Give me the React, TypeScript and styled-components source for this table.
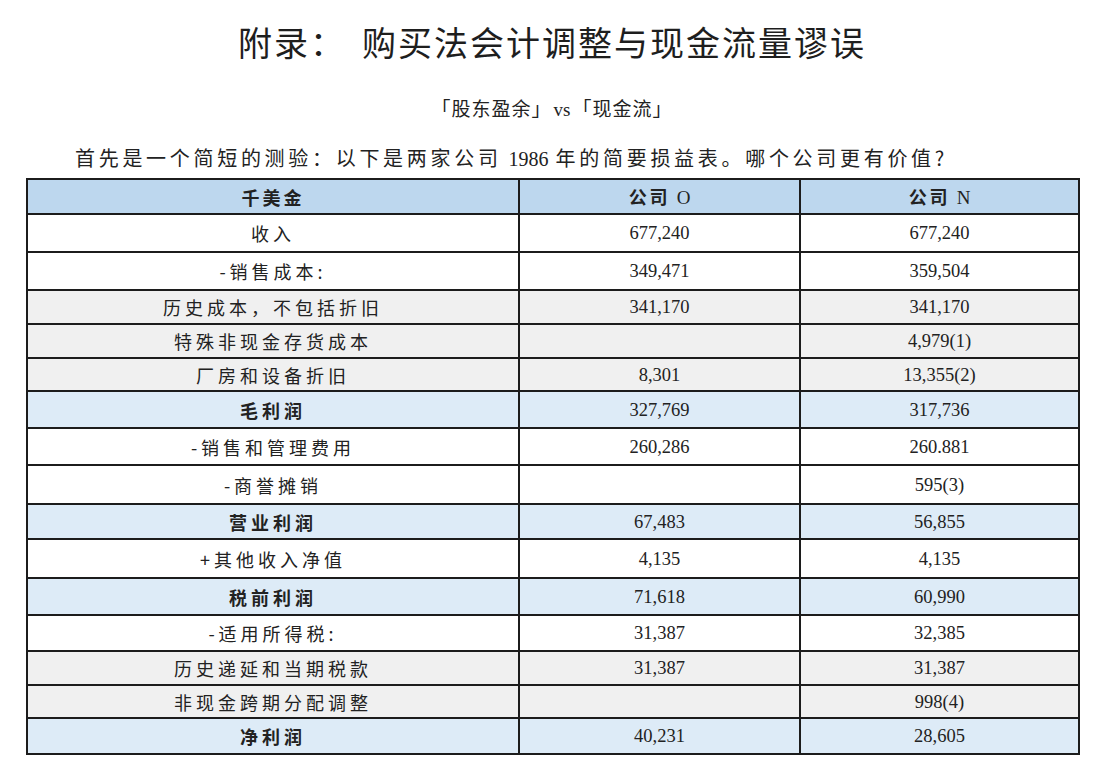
import React from 'react'
import styled, {createGlobalStyle} from 'styled-components'

const GlobalStyle = createGlobalStyle`
  html, body {
    margin: 0;
    padding: 0;
    background: #ffffff;
  }
`

const cjk = `"Noto Sans CJK SC", "Noto Sans", sans-serif`
const serif = `"Liberation Serif", "Noto Sans CJK SC", serif`

const Page = styled.div`
  width: 1102px;
  box-sizing: border-box;
  padding: 20px 24px 0 26px;
  color: #222;
  font-family: ${cjk};
`

const Title = styled.h1`
  margin: 0;
  height: 44px;
  font-size: 34px;
  line-height: 44px;
  font-weight: 400;
  letter-spacing: 2px;
  text-align: center;
  color: #1e1e1e;
`

const TitleGap = styled.span`
  display: inline-block;
  width: 16px;
`

const Subtitle = styled.div`
  margin-top: 32px;
  height: 24px;
  font-size: 19px;
  line-height: 24px;
  letter-spacing: 1px;
  text-align: center;
`

const Latin = styled.span`
  font-family: ${serif};
  letter-spacing: 0;
  line-height: 1;
  margin: 0 2px;
`

const Intro = styled.p`
  margin: 26px 0 0;
  height: 24px;
  font-size: 20px;
  line-height: 24px;
  letter-spacing: 3.7px;
  text-indent: 49px;
  white-space: nowrap;
`

const Table = styled.table`
  margin-top: 8px;
  width: 1052px;
  border-collapse: collapse;
  table-layout: fixed;
  border: 2px solid #1c1c1c;
`

type Tone = 'head' | 'plain' | 'gray' | 'total'

const toneBg: Record<Tone, string> = {
  head: '#bdd7ee',
  plain: '#ffffff',
  gray: '#f0f0f0',
  total: '#ddebf7',
}

const Row = styled.tr<{$tone: Tone; $h: number}>`
  background: ${(p) => toneBg[p.$tone]};
  height: ${(p) => p.$h}px;
`

const Cell = styled.td`
  border: 2px solid #1c1c1c;
  padding: 0;
  text-align: center;
  vertical-align: middle;
  font-size: 18px;
  line-height: 22px;
`

const Label = styled(Cell)<{$bold?: boolean}>`
  font-family: ${cjk};
  letter-spacing: 4px;
  font-weight: ${(p) => (p.$bold ? 700 : 400)};
`

const Num = styled(Cell)`
  font-family: ${serif};
  font-size: 18.5px;
`

const HeadCell = styled(Cell)`
  font-family: ${cjk};
  font-weight: 700;
  letter-spacing: 3px;
`

const HeadLatin = styled.span`
  font-family: ${serif};
  font-weight: 400;
  font-size: 19px;
  letter-spacing: 0;
  margin-left: 6px;
`

type Line = {label: string; o: string; n: string; tone: Tone; h: number}

const lines: Line[] = [
  {label: '收入', o: '677,240', n: '677,240', tone: 'plain', h: 38},
  {label: '-销售成本:', o: '349,471', n: '359,504', tone: 'plain', h: 38},
  {label: '历史成本，不包括折旧', o: '341,170', n: '341,170', tone: 'gray', h: 34},
  {label: '特殊非现金存货成本', o: '', n: '4,979(1)', tone: 'gray', h: 34},
  {label: '厂房和设备折旧', o: '8,301', n: '13,355(2)', tone: 'gray', h: 33},
  {label: '毛利润', o: '327,769', n: '317,736', tone: 'total', h: 37},
  {label: '-销售和管理费用', o: '260,286', n: '260.881', tone: 'plain', h: 37},
  {label: '-商誉摊销', o: '', n: '595(3)', tone: 'plain', h: 39},
  {label: '营业利润', o: '67,483', n: '56,855', tone: 'total', h: 35},
  {label: '+其他收入净值', o: '4,135', n: '4,135', tone: 'plain', h: 39},
  {label: '税前利润', o: '71,618', n: '60,990', tone: 'total', h: 37},
  {label: '-适用所得税:', o: '31,387', n: '32,385', tone: 'plain', h: 36},
  {label: '历史递延和当期税款', o: '31,387', n: '31,387', tone: 'gray', h: 34},
  {label: '非现金跨期分配调整', o: '', n: '998(4)', tone: 'gray', h: 33},
  {label: '净利润', o: '40,231', n: '28,605', tone: 'total', h: 36},
]

const App: React.FC = () => {
  return (
    <Page>
      <GlobalStyle />
      <Title>
        附录：<TitleGap />购买法会计调整与现金流量谬误
      </Title>
      <Subtitle>
        「股东盈余」<Latin>vs</Latin>「现金流」
      </Subtitle>
      <Intro>
        首先是一个简短的测验：以下是两家公司<Latin> 1986 </Latin>年的简要损益表。哪个公司更有价值?
      </Intro>
      <Table>
        <colgroup>
          <col style={{width: 492}} />
          <col style={{width: 281}} />
          <col style={{width: 279}} />
        </colgroup>
        <tbody>
          <Row $tone="head" $h={35}>
            <HeadCell>千美金</HeadCell>
            <HeadCell>
              公司<HeadLatin>O</HeadLatin>
            </HeadCell>
            <HeadCell>
              公司<HeadLatin>N</HeadLatin>
            </HeadCell>
          </Row>
          {lines.map((l) => (
            <Row key={l.label} $tone={l.tone} $h={l.h}>
              <Label $bold={l.tone === 'total'}>{l.label}</Label>
              <Num>{l.o}</Num>
              <Num>{l.n}</Num>
            </Row>
          ))}
        </tbody>
      </Table>
    </Page>
  )
}

export default App
